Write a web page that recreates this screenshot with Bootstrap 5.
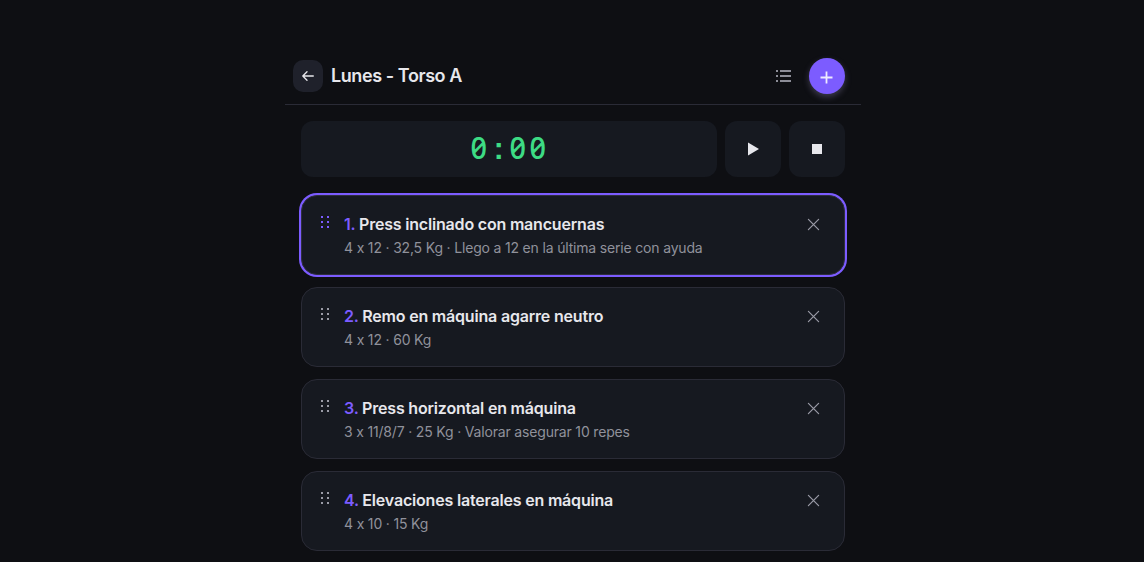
<!DOCTYPE html>
<html lang="es" data-bs-theme="dark">
<head>
<meta charset="utf-8">
<meta name="viewport" content="width=device-width, initial-scale=1">
<title>Lunes - Torso A</title>
<link href="https://cdn.jsdelivr.net/npm/bootstrap@5.3.0/dist/css/bootstrap.min.css" rel="stylesheet">
<style>
body{background:#0e0f13;color:#e7e7ec;font-family:Inter,"Liberation Sans",sans-serif;height:562px;overflow:hidden}
.app{width:576px;margin-left:285px;padding-top:48px}
.topbar{height:57px;padding:0 16px 0 8px;border-bottom:1px solid #2a2b36}
.back-btn{width:30px;height:32px;border-radius:10px;background:#1f212b;margin-right:8px}
.page-title{font-size:18px;line-height:24px;font-weight:600;letter-spacing:-.42px;color:#e7e7ec}
.list-icon{margin-right:18px}
.add-btn{width:36px;height:36px;background:#7c5cff;box-shadow:0 3px 6px rgba(150,140,190,.35)}
.add-btn svg{margin:3px 1px 0 0}
.muted{color:#9a9ba6}
.tile{background:#161920;border-radius:12px;height:56px}
.tile-btn{width:56px}
.clock{color:#3ddc84;font-family:"Noto Sans",sans-serif;font-size:31px;line-height:52px;font-feature-settings:"zero" 1;font-weight:500;padding-right:2px}
.clock span{display:inline-block;width:19.5px;text-align:center;transform:scaleX(.93)}
.clock .sep{font-family:"Liberation Sans",sans-serif;font-weight:700;font-size:32px}
.exercise{height:80px;background:#161920;border:1px solid #2a2b36;border-radius:16px;padding:16px 18px 0 18px}
.exercise.active{border-color:#2f2e3e;box-shadow:0 0 0 2px #7c5cff}
.exercise.active .grip{color:#7c5cff}
.grip{width:10px;height:14px;margin:3px 14px 0 0;color:#9a9ba6}
.ex-name{font-size:16px;line-height:24px;font-weight:600;letter-spacing:-.19px}
.ex-name b{color:#7c5cff;font-weight:600}
.ex-info{font-size:14px;line-height:20px;color:#90919b;margin-top:2px;letter-spacing:-.175px;font-feature-settings:"calt" 0}
.close-x{margin:6px 6px 0 0}
.exercise-list{gap:12px;margin-top:18px}
svg{display:block}
</style>
</head>
<body>
<main class="app">
  <header class="topbar d-flex align-items-center">
    <button class="btn p-0 border-0 back-btn d-flex align-items-center justify-content-center" aria-label="Volver">
      <svg width="12" height="10" viewBox="0 0 12 10" fill="none" stroke="#e7e7ec" stroke-width="1.3" stroke-linecap="round" stroke-linejoin="round"><path d="M11.3 5H.8M5 .7.8 5 5 9.3"/></svg>
    </button>
    <h1 class="page-title m-0 flex-grow-1">Lunes - Torso A</h1>
    <svg class="muted list-icon" width="15" height="12" viewBox="0 0 15 12" fill="currentColor"><path d="M0 0h2v2H0zM0 5h2v2H0zM0 10h2v2H0zM4 0h11v2H4zM4 5h11v2H4zM4 10h11v2H4z" opacity=".9"/></svg>
    <button class="btn p-0 border-0 rounded-circle add-btn d-flex align-items-center justify-content-center" aria-label="Añadir">
      <svg width="13" height="13" viewBox="0 0 13 13" stroke="#eeeaff" stroke-width="1.8"><path d="M6.5 .5v12M.5 6.5h12"/></svg>
    </button>
  </header>
  <section class="px-3 pt-3">
    <div class="d-flex gap-2">
      <div class="tile clock flex-grow-1 text-center"><span>0</span><span class="sep">:</span><span>0</span><span>0</span></div>
      <button class="btn p-0 border-0 tile tile-btn d-flex align-items-center justify-content-center" aria-label="Iniciar"><svg width="12" height="14" viewBox="0 0 12 14" fill="#e7e7ec"><path d="M1 .4 12 7 1 13.6z"/></svg></button>
      <button class="btn p-0 border-0 tile tile-btn d-flex align-items-center justify-content-center" aria-label="Parar"><svg width="10" height="10" fill="#e7e7ec"><path d="M0 0h10v10H0z"/></svg></button>
    </div>
    <div class="exercise-list d-flex flex-column" id="list"></div>
  </section>
</main>
<script>
const exercises = [
  ["Press inclinado con mancuernas", "4 x 12 · 32,5 Kg · Llego a 12 en la última serie con ayuda"],
  ["Remo en máquina agarre neutro", "4 x 12 · 60 Kg"],
  ["Press horizontal en máquina", "3 x 11/8/7 · 25 Kg · Valorar asegurar 10 repes"],
  ["Elevaciones laterales en máquina", "4 x 10 · 15 Kg"]
];
document.getElementById("list").innerHTML = exercises.map(([name, info], i) => `
  <article class="exercise d-flex align-items-start flex-shrink-0 ${i ? "" : "active"}">
    <svg class="grip" viewBox="0 0 10 14" fill="currentColor"><path d="M1 1h2v2H1zM7 1h2v2H7zM1 6h2v2H1zM7 6h2v2H7zM1 11h2v2H1zM7 11h2v2H7z"/></svg>
    <div class="flex-grow-1">
      <div class="ex-name"><b>${i + 1}.</b> ${name}</div>
      <div class="ex-info">${info}</div>
    </div>
    <svg class="close-x muted" width="13" height="13" viewBox="0 0 13 13" fill="none" stroke="currentColor" stroke-width="1.2" stroke-linecap="round"><path d="M1.4 1.4l10.2 10.2M11.6 1.4 1.4 11.6"/></svg>
  </article>`).join("");
</script>
<script src="https://cdn.jsdelivr.net/npm/bootstrap@5.3.0/dist/js/bootstrap.bundle.min.js"></script>
</body>
</html>
